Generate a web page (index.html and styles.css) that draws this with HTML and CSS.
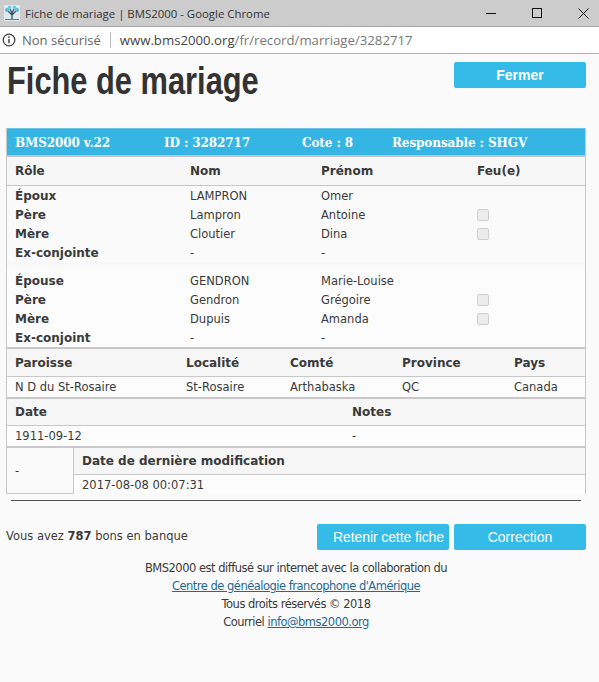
FILE: index.html
```html
<!DOCTYPE html>
<html lang="fr">
<head>
<meta charset="utf-8">
<title>Fiche de mariage | BMS2000</title>
<link rel="stylesheet" href="styles.css">
</head>
<body>
<div class="titlebar">
  <svg class="favicon" viewBox="0 0 16 16" width="16" height="16"><rect width="16" height="16" fill="#dfeaee"/><path d="M8 15V7M8 10L4 6M8 10l4-4M8 8L6 4M8 8l2-4" stroke="#2d4d5c" stroke-width="1.200" fill="none"/><path d="M1 14.500h14" stroke="#5b7d8c"/><circle cx="3" cy="5" r="2" fill="#5bb8d8"/><circle cx="13" cy="5" r="2" fill="#5bb8d8"/><circle cx="5.500" cy="2.500" r="1.800" fill="#6cc4e0"/><circle cx="10.500" cy="2.500" r="1.800" fill="#6cc4e0"/></svg>
  <span class="wintitle">Fiche de mariage | BMS2000 - Google Chrome</span>
  <div class="winctrls">
    <svg width="10" height="10" viewBox="0 0 10 10"><path d="M0 5.500h10" stroke="#111" fill="none"/></svg>
    <svg width="10" height="10" viewBox="0 0 10 10"><rect x=".5" y=".5" width="9" height="9" stroke="#111" fill="none"/></svg>
    <svg width="11" height="11" viewBox="0 0 11 11"><path d="M.5.5l10 10M10.500.5l-10 10" stroke="#111" fill="none"/></svg>
  </div>
</div>
<div class="addressbar">
  <svg width="14" height="14" viewBox="0 0 14 14"><circle cx="7" cy="7" r="5.800" stroke="#444" stroke-width="1.300" fill="none"/><path d="M7 6v4.200" stroke="#444" stroke-width="1.500"/><circle cx="7" cy="4.200" r=".9" fill="#444"/></svg>
  <span class="secure">Non sécurisé</span>
  <span class="sep"></span>
  <span class="url"><span class="host">www.bms2000.org</span>/fr/record/marriage/3282717</span>
</div>
<main class="page">
  <header class="pagehead">
    <h1>Fiche de mariage</h1>
    <a class="btn btn-bold" href="#">Fermer</a>
  </header>
  <section class="record">
    <div class="bar">
      <span class="b1">BMS2000 v.22</span><span class="b2">ID : 3282717</span><span class="b3">Cote : 8</span><span>Responsable : SHGV</span>
    </div>
    <div class="row people head"><b>Rôle</b><b>Nom</b><b>Prénom</b><b>Feu(e)</b></div>
    <div class="group">
      <div class="row people"><b>Époux</b><span>LAMPRON</span><span>Omer</span><span></span></div>
      <div class="row people"><b>Père</b><span>Lampron</span><span>Antoine</span><span class="cb"><input type="checkbox" disabled></span></div>
      <div class="row people"><b>Mère</b><span>Cloutier</span><span>Dina</span><span class="cb"><input type="checkbox" disabled></span></div>
      <div class="row people"><b>Ex-conjointe</b><span>-</span><span>-</span><span></span></div>
    </div>
    <div class="group second">
      <div class="row people"><b>Épouse</b><span>GENDRON</span><span>Marie-Louise</span><span></span></div>
      <div class="row people"><b>Père</b><span>Gendron</span><span>Grégoire</span><span class="cb"><input type="checkbox" disabled></span></div>
      <div class="row people"><b>Mère</b><span>Dupuis</span><span>Amanda</span><span class="cb"><input type="checkbox" disabled></span></div>
      <div class="row people"><b>Ex-conjoint</b><span>-</span><span>-</span><span></span></div>
    </div>
    <div class="row place head thick"><b>Paroisse</b><b>Localité</b><b>Comté</b><b>Province</b><b>Pays</b></div>
    <div class="row place val"><span>N D du St-Rosaire</span><span>St-Rosaire</span><span>Arthabaska</span><span>QC</span><span>Canada</span></div>
    <div class="row dates head thick"><b>Date</b><b>Notes</b></div>
    <div class="row dates val"><span>1911-09-12</span><span>-</span></div>
    <div class="modif">
      <div class="modif-left">-</div>
      <div class="modif-right">
        <div class="row head"><b>Date de dernière modification</b></div>
        <div class="row val"><span>2017-08-08 00:07:31</span></div>
      </div>
    </div>
  </section>
  <hr class="rule">
  <div class="actions">
    <p class="bank">Vous avez <b>787</b> bons en banque</p>
    <div class="btns">
      <a class="btn btn-offset" href="#">Retenir cette fiche</a>
      <a class="btn" href="#">Correction</a>
    </div>
  </div>
  <footer class="foot">
    <p>BMS2000 est diffusé sur internet avec la collaboration du</p>
    <p><a href="#">Centre de généalogie francophone d'Amérique</a></p>
    <p>Tous droits réservés © 2018</p>
    <p>Courriel <a href="#">info@bms2000.org</a></p>
  </footer>
</main>
</body>
</html>
```

FILE: styles.css
```css
* { box-sizing: border-box; }
html, body { margin: 0; padding: 0; }
body { background: #fafafa; color: #3a3a3a; font-family: "DejaVu Sans", Verdana, sans-serif; font-size: 11.500px; width: 599px; height: 682px; overflow: hidden; }

.titlebar { height: 27px; background: #cccccc; border-bottom: 1px solid #a8a8a8; display: flex; align-items: center; padding-left: 4px; }
.favicon { flex: none; }
.wintitle { font-family: "Open Sans", sans-serif; font-size: 11.400px; color: #333; margin-left: 5px; }
.winctrls { margin-left: auto; display: flex; align-items: center; gap: 36px; padding-right: 10px; }

.addressbar { height: 27px; background: #fff; border-bottom: 1px solid #b0b0b0; display: flex; align-items: center; padding-left: 2px; font-family: "Open Sans", sans-serif; font-size: 13px; color: #777; }
.secure { margin-left: 6px; color: #666; }
.sep { width: 1px; height: 16px; background: #bbb; margin: 0 9px; }
.url { font-size: 13.200px; }
.host { color: #444; }

.page { padding: 0 13px 0 6px; }
.pagehead { display: flex; justify-content: space-between; height: 74px; }
h1 { margin: 7px 0 0 1px; font-family: "Liberation Sans", sans-serif; font-size: 39px; line-height: 40px; font-weight: 700; color: #333; white-space: nowrap; width: 250px; transform: scaleX(0.79); transform-origin: left center; }
.btn { display: flex; align-items: center; justify-content: center; width: 132px; height: 26px; border-radius: 2px; background: #35bbe8; color: #fff; font-family: "Liberation Sans", sans-serif; font-size: 14px; text-decoration: none; }
.pagehead .btn { margin-top: 8px; }
.btn-bold { font-weight: 700; }
.btn-offset { padding-left: 11px; letter-spacing: -0.1px; white-space: nowrap; }

.record { border: 1px solid #c8c8c8; border-top: 0; }
.bar { height: 29px; padding: 1px 0 0 8px; background: #35b5e3; color: #fff; font-family: "DejaVu Serif", serif; font-weight: 700; font-size: 12px; letter-spacing: -0.1px; display: flex; align-items: center; border-top: 1px solid #6cc5e5; border-bottom: 2px solid #c4c4c4; }
.b1 { width: 149px; }
.b2 { width: 138px; }
.b3 { width: 90px; }

.row { display: grid; padding-left: 8px; align-items: center; }
.row b { font-weight: 700; color: #3a3a3a; font-size: 12px; }
.people { grid-template-columns: 175px 131px 156px 1fr; height: 19px; }
.people.head { height: 29px; background: #f6f6f6; border-bottom: 1px solid #c8c8c8; }
.group.second { padding-top: 9px; background: linear-gradient(#f6f6f6 0, #fcfcfc 9px); }
.cb { display: flex; }
.cb input { appearance: none; width: 12px; height: 12px; margin: 0; border: 1px solid #cfcfcf; border-radius: 2px; background: #ececec; }

.place { grid-template-columns: 171px 104px 112px 112px 1fr; }
.dates { grid-template-columns: 337px 1fr; }
.head { height: 28px; background: #f6f6f6; border-bottom: 1px solid #c8c8c8; }
.head.thick { border-top: 2px solid #c8c8c8; height: 29px; }
.place.head.thick { height: 30px; }
.val { height: 20px; background: #fcfcfc; }
.place.val, .dates.val { padding-bottom: 1px; }

.modif { display: flex; height: 47px; border-top: 2px solid #c8c8c8; }
.modif-left { width: 67px; flex: none; padding-left: 8px; display: flex; align-items: center; border-right: 1px solid #c8c8c8; }
.modif-right { flex: 1; }
.modif-right .head { height: 27px; }
.modif-right .val { height: 19px; }

.rule { margin: 6px 5px 0; border: 0; border-top: 1px solid #555; }
.actions { display: flex; justify-content: space-between; align-items: center; margin-top: 23px; height: 26px; }
.bank { margin: 0; font-size: 11.500px; position: relative; top: -1px; }
.btns { display: flex; gap: 5px; }
.foot { text-align: center; margin-top: 9px; font-size: 11.500px; }
.foot p { margin: 0; line-height: 18px; letter-spacing: -0.5px; }
.foot a { color: #1f6a94; }
```
